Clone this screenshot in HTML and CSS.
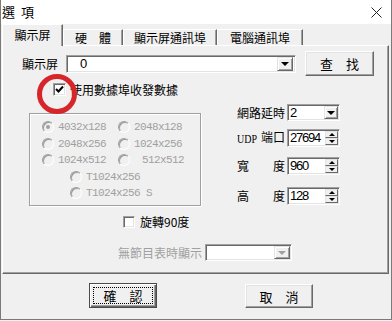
FILE: index.html
```html
<!DOCTYPE html>
<html>
	<head>
		<meta charset="utf-8">
		<link rel="stylesheet" href="styles.css">
	</head>
	<body>
		<div class="win">
			<div class="titlebar">
				<span class="title">選 項</span>
				<svg class="close" width="11" height="11" viewBox="0 0 11 11">
					<path d="M0.5 0.5 L10.5 10.5 M10.5 0.5 L0.5 10.5" stroke="#222" stroke-width="1" fill="none"/>
				</svg>
			</div>
			<div class="tabs">
				<div class="tab active">顯示屏</div>
				<div class="tab t2">硬　體</div>
				<div class="tab t3">顯示屏通訊埠</div>
				<div class="tab t4">電腦通訊埠</div>
			</div>
			<div class="panel">
				<div class="row-find">
					<span class="lbl">顯示屏</span>
					<div class="combo wide">
						<span class="val first">0</span>
						<span class="drop"><i class="tri"></i></span>
					</div>
					<div class="btn find">查　找</div>
				</div>

				<div class="check use-port">
					<span class="box">
						<svg width="9" height="9" viewBox="0 0 9 9"><path d="M1 4 L3.5 6.5 L8 1.5" stroke="#000" stroke-width="2" fill="none"/></svg>
					</span>
					<span>使用數據埠收發數據</span>
				</div>

				<div class="mid">
					<div class="group">
						<div class="radio on"><i class="dot"></i><span>4032x128</span></div>
						<div class="radio"><i class="dot"></i><span>2048x128</span></div>
						<div class="radio"><i class="dot"></i><span>2048x256</span></div>
						<div class="radio"><i class="dot"></i><span>1024x256</span></div>
						<div class="radio"><i class="dot"></i><span>1024x512</span></div>
						<div class="radio"><i class="dot"></i><span class="pad">512x512</span></div>
						<div class="radio solo"><i class="dot"></i><span>T1024x256</span></div>
						<div class="radio solo"><i class="dot"></i><span>T1024x256 S</span></div>
					</div>

					<div class="form">
						<div class="frow r1">
							<span class="flbl"><span>網路延時</span></span>
							<div class="combo small">
								<span class="val">2</span>
								<span class="drop"><i class="tri"></i></span>
							</div>
						</div>
						<div class="frow r2">
							<span class="flbl"><span class="latin">UDP</span><span>端口</span></span>
							<div class="combo small tall">
								<span class="val">27694</span>
								<span class="spin"><span class="arr"><i class="up"></i></span><span class="arr"><i class="tri"></i></span></span>
							</div>
						</div>
						<div class="frow r3">
							<span class="flbl"><span>寬</span><span>度</span></span>
							<div class="combo small tall">
								<span class="val">960</span>
								<span class="spin"><span class="arr"><i class="up"></i></span><span class="arr"><i class="tri"></i></span></span>
							</div>
						</div>
						<div class="frow r4">
							<span class="flbl"><span>高</span><span>度</span></span>
							<div class="combo small tall">
								<span class="val">128</span>
								<span class="spin"><span class="arr"><i class="up"></i></span><span class="arr"><i class="tri"></i></span></span>
							</div>
						</div>
					</div>
				</div>

				<div class="check rotate">
					<span class="box"></span>
					<span>旋轉90度</span>
				</div>

				<div class="row-empty">
					<span class="muted">無節目表時顯示</span>
					<div class="combo off">
						<span class="val"></span>
						<span class="drop"><i class="tri"></i></span>
					</div>
				</div>

				<div class="mark"></div>
			</div>

			<div class="actions">
				<div class="btn default"><span class="focus">確　認</span></div>
				<div class="btn cancel">取　消</div>
			</div>
		</div>
	</body>
</html>
```

FILE: styles.css
```css
html, body {
	margin: 0;
}

body {
	background-color: #f0f0f0;
	font-family: "Noto Sans CJK TC", sans-serif;
	font-size: 12px;
	color: #000;
}

.win {
	width: 392px;
	height: 320px;
	box-sizing: border-box;
	border: 1px solid #7a7a7a;
	border-top: 0;
	background-color: #f0f0f0;
}

/* title bar */
.titlebar {
	height: 24px;
	background-color: #fff;
	display: flex;
	align-items: center;
	justify-content: space-between;
	padding: 0 9px 0 1px;
}

.title {
	font-size: 13px;
	line-height: 24px;
	word-spacing: 3px;
}

/* tabs */
.tabs {
	display: flex;
	align-items: flex-end;
	height: 21px;
	padding-left: 1px;
}

.tab {
	box-sizing: border-box;
	height: 16px;
	line-height: 15px;
	text-align: center;
	border: 1px solid;
	border-bottom: 0;
	border-color: #fff #696969 transparent #fff;
	box-shadow: inset -1px 0 #a0a0a0;
}

.tab.active {
	width: 61px;
	height: 22px;
	line-height: 19px;
	margin-bottom: -1px;
	position: relative;
	z-index: 1;
	background-color: #f0f0f0;
}

.t2 { width: 60px; }
.t3 { width: 94px; }
.t4 { width: 86px; }

/* page panel */
.panel {
	position: relative;
	box-sizing: border-box;
	width: 387px;
	height: 229px;
	margin-left: 1px;
	border: 1px solid;
	border-color: #fff #696969 #696969 #fff;
	box-shadow: inset -1px -1px #a0a0a0;
}

.row-find {
	display: flex;
	align-items: center;
	height: 25px;
	margin-top: 5px;
	padding-left: 19px;
}

.lbl {
	width: 36px;
	margin-right: 8px;
	line-height: 14px;
}

/* sunken field */
.combo {
	box-sizing: border-box;
	display: flex;
	align-items: center;
	height: 18px;
	padding: 2px;
	background-color: #fff;
	border: 1px solid;
	border-color: #a0a0a0 #fff #fff #a0a0a0;
	box-shadow: inset 1px 1px #696969, inset -1px -1px #e3e3e3;
}

.combo.wide {
	width: 230px;
}

.val {
	flex: 1;
	font-family: "Liberation Sans", sans-serif;
	font-size: 13px;
	letter-spacing: -1.2px;
	line-height: 14px;
}

.val.first {
	padding-left: 11px;
}

.drop {
	box-sizing: border-box;
	width: 16px;
	height: 14px;
	display: flex;
	align-items: center;
	justify-content: center;
	background-color: #f0f0f0;
	border: 1px solid;
	border-color: #e3e3e3 #696969 #696969 #e3e3e3;
	box-shadow: inset 1px 1px #fff, inset -1px -1px #a0a0a0;
}

.tri {
	width: 0;
	height: 0;
	border-left: 4px solid transparent;
	border-right: 4px solid transparent;
	border-top: 4px solid #000;
}

.up {
	width: 0;
	height: 0;
	border-left: 3px solid transparent;
	border-right: 3px solid transparent;
	border-bottom: 3px solid #000;
}

.spin {
	display: flex;
	flex-direction: column;
	width: 13px;
}

.spin .arr {
	box-sizing: border-box;
	height: 7px;
	display: flex;
	align-items: center;
	justify-content: center;
	background-color: #f0f0f0;
	border: 1px solid;
	border-color: #e3e3e3 #696969 #696969 #e3e3e3;
}

.spin .tri {
	border-left-width: 3px;
	border-right-width: 3px;
	border-top-width: 3px;
}

/* raised button */
.btn {
	box-sizing: border-box;
	display: flex;
	align-items: center;
	justify-content: center;
	background-color: #f0f0f0;
	border: 1px solid;
	border-color: #fff #696969 #696969 #fff;
	box-shadow: inset -1px -1px #a0a0a0, inset 1px 1px #e3e3e3;
	font-size: 13px;
}

.btn.find {
	width: 69px;
	height: 25px;
	margin-left: 9px;
}

/* checkboxes */
.check {
	display: flex;
	align-items: center;
	height: 13px;
	line-height: 13px;
}

.box {
	box-sizing: border-box;
	width: 13px;
	height: 13px;
	margin-right: 4px;
	display: flex;
	align-items: center;
	justify-content: center;
	background-color: #fff;
	border: 1px solid;
	border-color: #a0a0a0 #fff #fff #a0a0a0;
	box-shadow: inset 1px 1px #696969, inset -1px -1px #e3e3e3;
}

.use-port {
	margin-top: 7px;
	margin-left: 50px;
}

.rotate {
	margin-top: 9px;
	margin-left: 120px;
}

.rotate .box {
	width: 12px;
	height: 12px;
	margin-right: 5px;
}

/* resolution group + network form */
.mid {
	display: flex;
	align-items: flex-start;
	margin-top: 8px;
}

.group {
	box-sizing: border-box;
	width: 172px;
	height: 93px;
	margin-top: 9px;
	margin-left: 26px;
	padding: 5px 0 0 12px;
	border: 1px solid #a0a0a0;
	box-shadow: inset 1px 1px #fff, 1px 1px #fff;
	display: grid;
	grid-template-columns: 76px 76px;
	grid-auto-rows: 16.5px;
}

.radio {
	display: flex;
	align-items: center;
	font-family: "Liberation Mono", monospace;
	font-size: 11px;
	letter-spacing: -0.6px;
	color: #a0a0a0;
}

.radio.solo {
	grid-column: 1 / 3;
	padding-left: 28px;
}

.radio .dot {
	box-sizing: border-box;
	width: 12px;
	height: 12px;
	margin-right: 4px;
	border-radius: 50%;
	border: 1px solid;
	border-color: #a0a0a0 #fff #fff #a0a0a0;
	box-shadow: inset 1px 1px #9a9a9a;
	background-color: #f0f0f0;
	display: flex;
	align-items: center;
	justify-content: center;
}

.radio.on .dot::after {
	content: "";
	width: 4px;
	height: 4px;
	border-radius: 50%;
	background-color: #a0a0a0;
}

.pad {
	padding-left: 8px;
}

.form {
	margin-left: 36px;
}

.frow {
	display: flex;
	align-items: center;
}

.r2 { margin-top: 8px; }
.r3 { margin-top: 10px; }
.r4 { margin-top: 12px; }

.flbl {
	width: 48px;
	margin-right: 2px;
	display: flex;
	justify-content: space-between;
	align-items: baseline;
	line-height: 14px;
}

.latin {
	font-family: "Liberation Serif", serif;
	font-size: 10px;
	transform: scaleY(1.2);
}

.combo.small {
	width: 53px;
	height: 17px;
	padding: 1px 1px 1px 2px;
}

.combo.small .drop {
	width: 14px;
	height: 13px;
}

.combo.tall {
	height: 18px;
}

.row-empty {
	display: flex;
	align-items: center;
	margin-top: 16px;
	padding-left: 115px;
}

.muted {
	color: #a0a0a0;
	width: 84px;
	margin-right: 3px;
	line-height: 14px;
}

.combo.off {
	width: 87px;
	height: 17px;
	padding: 1px;
}

.combo.off .drop {
	height: 13px;
}

.combo.off .tri {
	border-top-color: #a0a0a0;
}

/* the red highlight drawn over the screenshot */
.mark {
	position: absolute;
	left: 34px;
	top: 28px;
	width: 40px;
	height: 40px;
	box-sizing: border-box;
	border: 5px solid #d7262b;
	border-radius: 50%;
}

/* dialog buttons */
.actions {
	display: flex;
	align-items: flex-start;
	gap: 88px;
	margin-top: 9px;
	padding-left: 88px;
}

.btn.default {
	width: 68px;
	height: 25px;
	border: 1px solid #4a4a4a;
	box-shadow: inset 1px 1px #fff, inset -1px -1px #696969, inset -2px -2px #a0a0a0;
	padding: 3px;
}

.focus {
	box-sizing: border-box;
	flex: 1;
	align-self: stretch;
	display: flex;
	align-items: center;
	justify-content: center;
	border: 1px dotted #000;
}

.btn.cancel {
	width: 68px;
	height: 24px;
	margin-top: 1px;
}
```
